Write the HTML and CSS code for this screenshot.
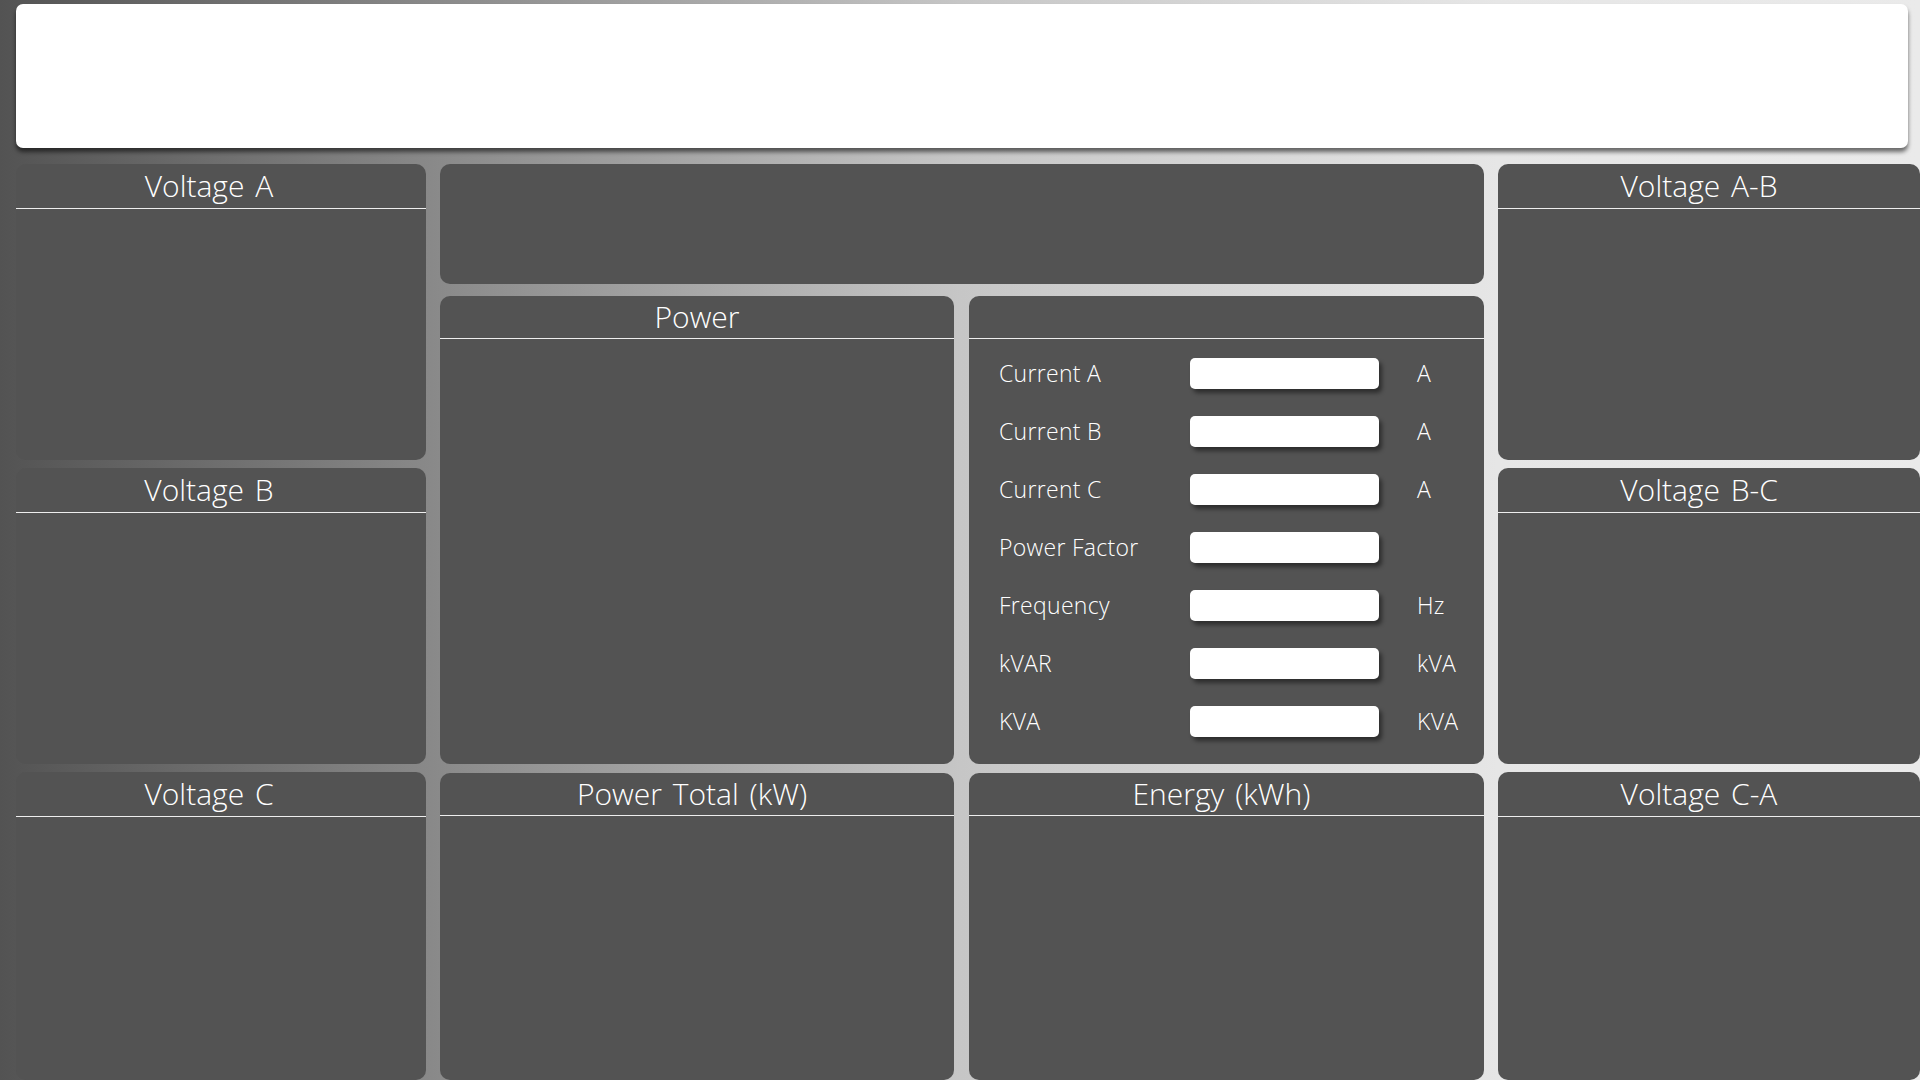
FILE: index.html
```html
<!DOCTYPE html>
<html lang="en">
<head>
    <meta charset="utf-8">
    <title>Power Meter</title>
<link rel="stylesheet" href="styles.css">
</head>
<body>
<div class="topbar"></div>
<div class="board">
    <div class="side left">
        <div class="panel"><div class="head">Voltage A</div></div>
        <div class="panel"><div class="head">Voltage B</div></div>
        <div class="panel last"><div class="head">Voltage C</div></div>
    </div>
    <div class="middle">
        <div class="panel banner"></div>
        <div class="quad">
            <div class="panel"><div class="head small">Power</div></div>
            <div class="panel">
                <div class="head small"></div>
                <table class="readings">
                    <tr><td class="lbl">Current A</td><td><div class="box"></div></td><td class="unit">A</td></tr>
                    <tr><td class="lbl">Current B</td><td><div class="box"></div></td><td class="unit">A</td></tr>
                    <tr><td class="lbl">Current C</td><td><div class="box"></div></td><td class="unit">A</td></tr>
                    <tr><td class="lbl">Power Factor</td><td><div class="box"></div></td><td class="unit"></td></tr>
                    <tr><td class="lbl">Frequency</td><td><div class="box"></div></td><td class="unit">Hz</td></tr>
                    <tr><td class="lbl">kVAR</td><td><div class="box"></div></td><td class="unit">kVA</td></tr>
                    <tr><td class="lbl">KVA</td><td><div class="box"></div></td><td class="unit">KVA</td></tr>
                </table>
            </div>
            <div class="panel"><div class="head small shift">Power Total (kW)</div></div>
            <div class="panel"><div class="head small shift">Energy (kWh)</div></div>
        </div>
    </div>
    <div class="side right">
        <div class="panel"><div class="head">Voltage A-B</div></div>
        <div class="panel"><div class="head">Voltage B-C</div></div>
        <div class="panel last"><div class="head">Voltage C-A</div></div>
    </div>
</div>
</body>
</html>
```

FILE: styles.css
```css
html, body {margin: 0; height: 1080px; overflow: hidden;}
body {
    background: linear-gradient(to right, #535353 0%, #888888 22%, #c6c6c6 50%, #e6e6e6 78%, #eaeaea 100%);
    font-family: "Open Sans", "Liberation Sans", sans-serif;
    font-weight: 300;
    color: #fff;
    padding: 4px 0 0 16px;
    box-sizing: border-box;
}
.topbar {width: 1892px; height: 144px; background: #fff; border-radius: 7px; box-shadow: 0 4px 4px rgba(0,0,0,0.55); margin-bottom: 16px;}
.board {display: grid; grid-template-columns: 410px 1044px 1fr; column-gap: 14px; height: 916px;}
.side {display: flex; flex-direction: column; gap: 8px;}
.side .panel {height: 296px;}
.side .panel.last {flex: 1;}
.left .head {padding-right: 24px;}
.right .head {padding-right: 20px;}
.panel {background: #535353; border-radius: 10px; overflow: hidden;}
.head {height: 44px; border-bottom: 1px solid #eee; font-size: 30px; line-height: 44px; text-align: center; white-space: nowrap; word-spacing: 3px;}
.head.small {height: 42px; line-height: 42px;}
.head.shift {padding-right: 10px;}
.middle {display: flex; flex-direction: column; gap: 12px;}
.banner {height: 120px;}
.quad {flex: 1; display: grid; grid-template-columns: 514px 515px; grid-template-rows: 468px 1fr; column-gap: 15px; row-gap: 9px;}
.readings {border-collapse: collapse; margin: 5px 0 0 30px; font-size: 23px; letter-spacing: 0.3px;}
.readings td {height: 58px; padding: 0; vertical-align: middle;}
.readings .lbl {width: 191px;}
.readings .unit {padding-left: 38px;}
.box {width: 189px; height: 31px; background: #fff; border-radius: 5px; box-shadow: 3px 4px 4px rgba(0,0,0,0.45);}
```
